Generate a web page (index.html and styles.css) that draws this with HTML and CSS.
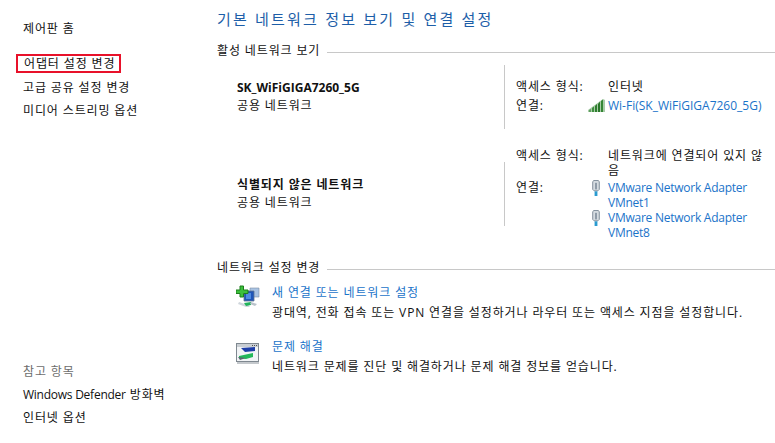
FILE: index.html
```html
<!DOCTYPE html>
<html lang="ko">
<head>
    <meta charset="UTF-8">
    <title>네트워크 및 공유 센터</title>
    <link rel="stylesheet" href="styles.css">
</head>
<body>

<aside class="sidebar">
    <div class="side-top">
        <a class="side-link home">제어판 홈</a>
        <a class="side-link selected">어댑터 설정 변경</a>
        <a class="side-link">고급 공유 설정 변경</a>
        <a class="side-link">미디어 스트리밍 옵션</a>
    </div>
    <div class="side-bottom">
        <div class="side-note">참고 항목</div>
        <a class="side-link"><span class="latin">Windows Defender</span> 방화벽</a>
        <a class="side-link">인터넷 옵션</a>
    </div>
</aside>

<main class="content">
    <h1>기본 네트워크 정보 보기 및 연결 설정</h1>

    <div class="section-title first"><span>활성 네트워크 보기</span></div>

    <div class="network">
        <div class="network-name">
            <b class="ssid">SK_WiFiGIGA7260_5G</b>
            <div>공용 네트워크</div>
        </div>
        <div class="divider"></div>
        <div class="details wifi">
            <div class="label">액세스 형식:</div>
            <div class="value">인터넷</div>
            <div class="label">연결:</div>
            <div class="value">
                <a class="conn ssid">
                    <svg class="wifi-icon" width="17" height="13" viewBox="0 0 17 13">
                        <path d="M0 13v-2L15 0l2 1v12z" fill="#a8cca8"/>
                        <path d="M1 13v-2l2-1v3z" fill="#5f9f5f"/>
                        <path d="M4 13V9l2-1.500V13z" fill="#3f8f3f"/>
                        <path d="M7 13V7l2-2v8z" fill="#2f7f2f"/>
                        <path d="M10 13V5l2-2.500V13z" fill="#2a772a"/>
                        <path d="M13 13V2l2-1.500V13z" fill="#358535"/>
                    </svg>
                    Wi-Fi(SK_WiFiGIGA7260_5G)
                </a>
            </div>
        </div>
    </div>

    <div class="network second">
        <div class="network-name">
            <b>식별되지 않은 네트워크</b>
            <div>공용 네트워크</div>
        </div>
        <div class="divider"></div>
        <div class="details">
            <div class="label">액세스 형식:</div>
            <div class="value wrap">네트워크에 연결되어 있지 않음</div>
            <div class="label">연결:</div>
            <div class="value">
                <a class="conn latin">
                    <svg class="nic-icon" width="8" height="16" viewBox="0 0 8 17">
                        <path d="M1.500.500h5l1 1.500v8l-1.500 1.500h-4L.500 10V2z" fill="#d5dbe0" stroke="#7d8a96"/>
                        <rect x="3" y="3" width="2" height="7" fill="#8b98a5"/>
                        <rect x="2.500" y="12" width="3" height="5" fill="#2b9bd0"/>
                    </svg>
                    VMware Network Adapter VMnet1
                </a>
                <a class="conn latin">
                    <svg class="nic-icon" width="8" height="16" viewBox="0 0 8 17">
                        <path d="M1.500.500h5l1 1.500v8l-1.500 1.500h-4L.500 10V2z" fill="#d5dbe0" stroke="#7d8a96"/>
                        <rect x="3" y="3" width="2" height="7" fill="#8b98a5"/>
                        <rect x="2.500" y="12" width="3" height="5" fill="#2b9bd0"/>
                    </svg>
                    VMware Network Adapter VMnet8
                </a>
            </div>
        </div>
    </div>

    <div class="section-title"><span>네트워크 설정 변경</span></div>

    <div class="task">
        <svg class="task-icon" width="24" height="23" viewBox="0 0 24 23">
            <path d="M14 3h9v9h-9z" fill="#a9c3e3" stroke="#7d8fa6" stroke-width=".6"/>
            <path d="M8 6h10v10H8z" fill="#1f56b8" stroke="#5f7391" stroke-width=".8"/>
            <path d="M10 8h5v6h-5z" fill="#4f8be0"/>
            <path d="M4 1h3.500v4H12v3.500H7.500V12H4V8.500H0V5h4z" fill="#3cc03c" stroke="#1d7f1d"/>
            <path d="M3 17l9 3 2 2-4 0-8-3z" fill="#cfd6dc"/>
            <path d="M8 18l7-1 0 3-5 1z" fill="#21b25a"/>
            <path d="M15 17l6 2-2 2-5-2z" fill="#b9c2ca"/>
        </svg>
        <div class="task-text">
            <a class="task-link">새 연결 또는 네트워크 설정</a>
            <div>광대역, 전화 접속 또는 VPN 연결을 설정하거나 라우터 또는 액세스 지점을 설정합니다.</div>
        </div>
    </div>

    <div class="task last">
        <svg class="task-icon" width="24" height="21" viewBox="0 0 24 21">
            <rect x=".500" y=".500" width="22" height="18" fill="#f2f4f6" stroke="#7f8890"/>
            <rect x="1" y="1" width="21" height="3" fill="#c9ced3"/>
            <path d="M16 2h1v1h-1zM18 2h1v1h-1zM20 2h1v1h-1z" fill="#555"/>
            <path d="M5 5l14-1v4L9 9z" fill="#1f3fa8"/>
            <path d="M3 13l14-3 0 4-7 2-7-1z" fill="#23b85a"/>
            <path d="M2 14l8 1-6 2z" fill="#5a6670"/>
            <path d="M1 19h22v2H1z" fill="#c4c8cc"/>
        </svg>
        <div class="task-text">
            <a class="task-link">문제 해결</a>
            <div>네트워크 문제를 진단 및 해결하거나 문제 해결 정보를 얻습니다.</div>
        </div>
    </div>
</main>

</body>
</html>
```

FILE: styles.css
```css
html, body {
    height: 100%;
}

body {
    font-family: "Open Sans", "Noto Sans CJK KR", sans-serif;
    font-size: 12px;
    line-height: 15px;
    letter-spacing: 0.87px;
    color: #111;
    background: white;
    margin: 0;
    display: flex;
    overflow: hidden;
}

a {
    display: block;
}

.latin {
    letter-spacing: -0.25px;
}

.ssid {
    letter-spacing: 0;
}

.sidebar {
    width: 217px;
    flex-shrink: 0;
    display: flex;
    flex-direction: column;
    justify-content: space-between;
    padding: 21px 0 18px 23px;
    box-sizing: border-box;
}

.side-link {
    margin-bottom: 8px;
    white-space: nowrap;
}

.side-link:last-child {
    margin-bottom: 0;
}

.home {
    margin-bottom: 18px;
}

.selected {
    margin: 0 0 7px -7px;
    width: 95px;
    padding-left: 6px;
    border: 2px solid #e8112a;
}

.side-note {
    color: #6d6d6d;
    margin-bottom: 8px;
}

.content {
    flex: 1;
    min-width: 0;
}

h1 {
    font-size: 15px;
    font-weight: normal;
    line-height: 20px;
    color: #1d5ea8;
    margin: 9px 0 0;
    letter-spacing: 2.2px;
}

.section-title {
    display: flex;
    align-items: center;
    gap: 7px;
}

.section-title::after {
    content: "";
    flex: 1;
    height: 1px;
    background: #c8c8c8;
    margin-top: 4px;
}

.section-title.first {
    margin-top: 14px;
}

.network {
    display: flex;
    align-items: center;
    margin-top: 7px;
}

.network.second {
    margin-top: 19px;
    margin-bottom: 20px;
}

.network-name {
    width: 287px;
    padding-left: 20px;
    box-sizing: border-box;
    line-height: 18px;
}

.divider {
    width: 1px;
    height: 64px;
    background: #c8c8c8;
    flex-shrink: 0;
}

.details {
    margin-left: 11px;
    display: grid;
    grid-template-columns: 92px 160px;
    row-gap: 2px;
}

.details.wifi {
    row-gap: 4px;
    margin-top: -3px;
}

.value.wrap {
    word-break: break-all;
}

.conn {
    color: #1a73c9;
    position: relative;
}

.wifi-icon {
    position: absolute;
    left: -20px;
    top: 1px;
}

.nic-icon {
    position: absolute;
    left: -16px;
    top: 0;
}

.task {
    display: flex;
    margin-top: 10px;
    margin-left: 19px;
    gap: 12px;
}

.task.last {
    margin-top: 19px;
}

.task-icon {
    flex-shrink: 0;
}

.task.last .task-icon {
    margin-top: 4px;
}

.task-link {
    color: #1a73c9;
    margin-bottom: 5px;
}
```
